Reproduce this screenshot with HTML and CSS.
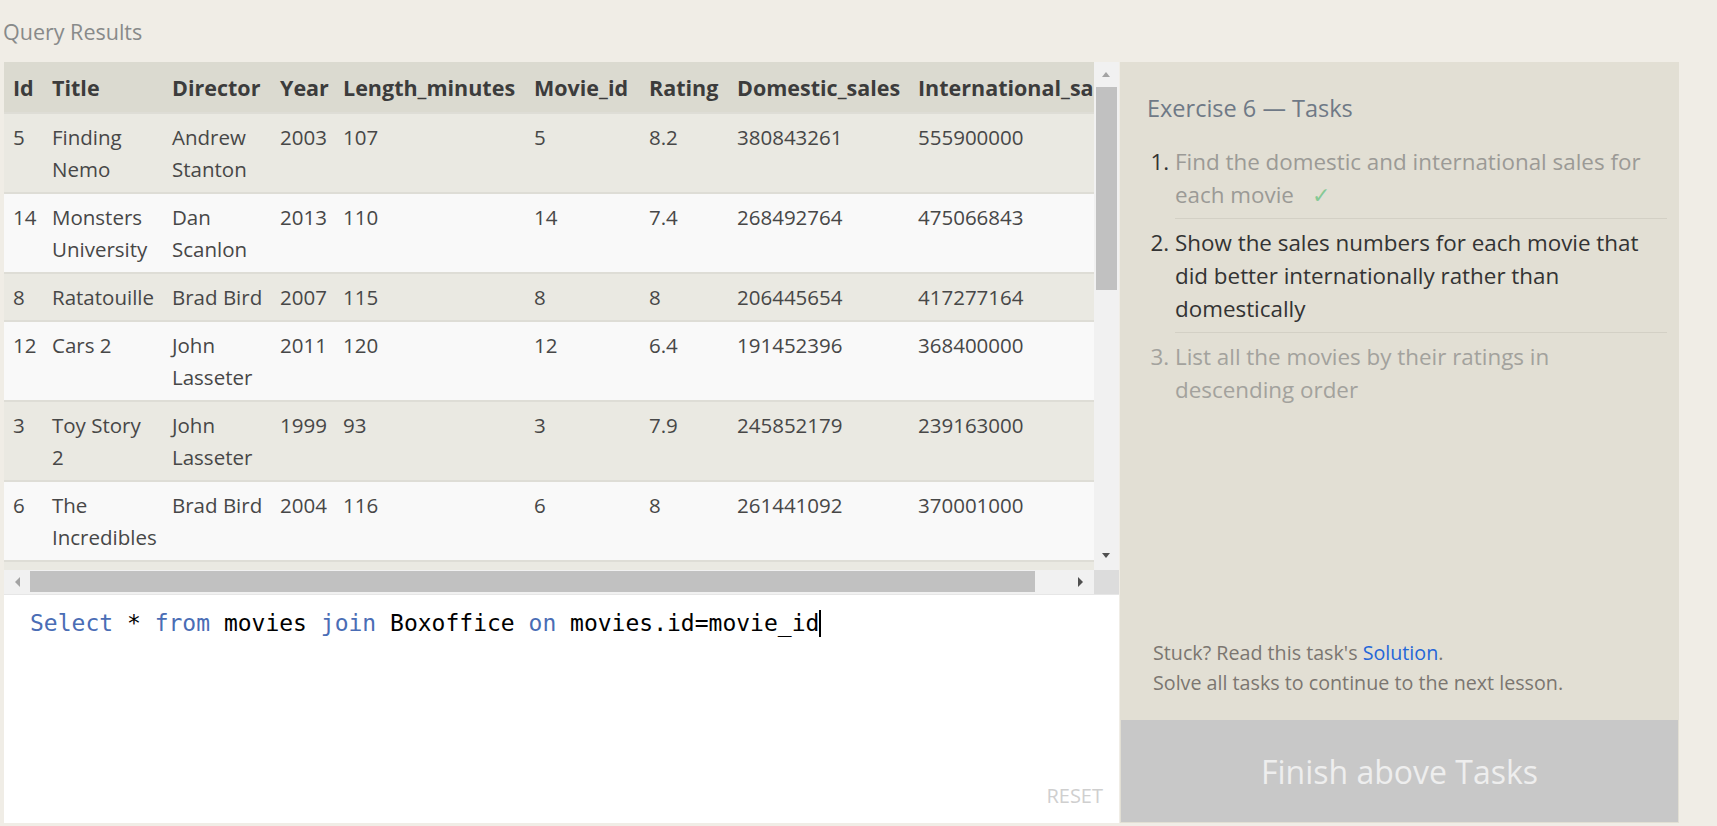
FILE: index.html
```html
<!DOCTYPE html>
<html lang="en">
<head>
<meta charset="utf-8">
<title>Query Results</title>
<link rel="stylesheet" href="styles.css">
</head>
<body>
<div class="app">
  <h2 class="qr-title">Query Results</h2>
  <div class="workspace">
    <section class="left">
      <div class="results">
        <div class="viewport">
          <table class="grid">
            <colgroup>
              <col class="c-id"><col class="c-title"><col class="c-dir"><col class="c-year"><col class="c-len"><col class="c-mid"><col class="c-rat"><col class="c-dom"><col class="c-int">
            </colgroup>
            <thead>
              <tr><th>Id</th><th>Title</th><th>Director</th><th>Year</th><th>Length_minutes</th><th>Movie_id</th><th>Rating</th><th>Domestic_sales</th><th>International_sales</th></tr>
            </thead>
            <tbody>
              <tr><td>5</td><td>Finding<br>Nemo</td><td>Andrew<br>Stanton</td><td>2003</td><td>107</td><td>5</td><td>8.2</td><td>380843261</td><td>555900000</td></tr>
              <tr><td>14</td><td>Monsters<br>University</td><td>Dan<br>Scanlon</td><td>2013</td><td>110</td><td>14</td><td>7.4</td><td>268492764</td><td>475066843</td></tr>
              <tr><td>8</td><td>Ratatouille</td><td>Brad Bird</td><td>2007</td><td>115</td><td>8</td><td>8</td><td>206445654</td><td>417277164</td></tr>
              <tr><td>12</td><td>Cars 2</td><td>John<br>Lasseter</td><td>2011</td><td>120</td><td>12</td><td>6.4</td><td>191452396</td><td>368400000</td></tr>
              <tr><td>3</td><td>Toy Story<br>2</td><td>John<br>Lasseter</td><td>1999</td><td>93</td><td>3</td><td>7.9</td><td>245852179</td><td>239163000</td></tr>
              <tr><td>6</td><td>The<br>Incredibles</td><td>Brad Bird</td><td>2004</td><td>116</td><td>6</td><td>8</td><td>261441092</td><td>370001000</td></tr>
              <tr class="peek"><td></td><td></td><td></td><td></td><td></td><td></td><td></td><td></td><td></td></tr>
            </tbody>
          </table>
        </div>
        <div class="vscroll">
          <span class="arrow arrow-up"></span>
          <div class="vthumb"></div>
          <span class="arrow arrow-down"></span>
        </div>
        <div class="hscroll">
          <span class="arrow arrow-left"></span>
          <div class="hthumb"></div>
          <span class="arrow arrow-right"></span>
        </div>
        <div class="corner"></div>
      </div>
      <div class="editor">
        <div class="code"><span class="kw">Select</span> * <span class="kw">from</span> movies <span class="kw">join</span> Boxoffice <span class="kw">on</span> movies.id=movie_id<span class="caret"></span></div>
        <div class="reset">RESET</div>
      </div>
    </section>
    <aside class="tasks">
      <h3 class="tasks-title">Exercise 6 — Tasks</h3>
      <ol class="task-list">
        <li class="task done"><span class="task-text">Find the domestic and international sales for each movie</span><span class="check">✓</span></li>
        <li class="task current">Show the sales numbers for each movie that did better internationally rather than domestically</li>
        <li class="task todo">List all the movies by their ratings in descending order</li>
      </ol>
      <div class="spacer"></div>
      <div class="stuck">
        <p>Stuck? Read this task's <a class="solution" href="#">Solution</a>.</p>
        <p>Solve all tasks to continue to the next lesson.</p>
      </div>
      <button class="finish" type="button">Finish above Tasks</button>
    </aside>
  </div>
</div>
</body>
</html>
```
FILE: styles.css
```css
* { box-sizing: border-box; }

html, body {
  margin: 0;
  padding: 0;
}

body {
  background: #f0ede6;
  font-family: "Open Sans", "Noto Sans", sans-serif;
  color: #444;
  width: 1717px;
  height: 826px;
  overflow: hidden;
}

.qr-title {
  margin: 0 0 0 3px;
  height: 62px;
  padding-top: 18px;
  font-size: 21.5px;
  line-height: 28px;
  font-weight: 400;
  color: #888a8a;
}

.workspace {
  display: flex;
  height: 761px;
}

.left {
  margin-left: 4px;
  width: 1115px;
  display: flex;
  flex-direction: column;
}

.results {
  display: grid;
  grid-template-columns: 1090px 25px;
  grid-template-rows: 508px 24px;
}

.viewport {
  overflow: hidden;
  background: #eae9e2;
}

.grid {
  border-collapse: collapse;
  table-layout: fixed;
  width: 1135px;
  font-size: 20.5px;
  line-height: 32px;
}

.c-id { width: 39px; }
.c-title { width: 120px; }
.c-dir { width: 108px; }
.c-year { width: 63px; }
.c-len { width: 191px; }
.c-mid { width: 115px; }
.c-rat { width: 88px; }
.c-dom { width: 181px; }
.c-int { width: 230px; }

.grid th,
.grid td {
  text-align: left;
  vertical-align: top;
  white-space: nowrap;
  overflow: hidden;
  padding: 7px 2px 7px 9px;
}

.grid th {
  background: #dbdad0;
  color: #3c3c3c;
  font-size: 21.5px;
  font-weight: 700;
  padding-top: 10px;
  padding-bottom: 8px;
}

.grid td {
  color: #474747;
  border-top: 2px solid #deddd6;
}

.grid .peek td { height: 46px; }

.grid tbody tr:nth-child(odd) td { background: #eae9e2; }
.grid tbody tr:nth-child(even) td { background: #f9f9f9; }

.vscroll {
  background: #f1f1f1;
  position: relative;
}

.vthumb {
  position: absolute;
  left: 2px;
  top: 25px;
  width: 21px;
  height: 203px;
  background: #c1c1c1;
}

.hscroll {
  background: #f1f1f1;
  position: relative;
}

.hthumb {
  position: absolute;
  left: 26px;
  top: 1px;
  width: 1005px;
  height: 21px;
  background: #c1c1c1;
}

.corner {
  background: #dcdcdc;
}

.arrow {
  position: absolute;
  width: 0;
  height: 0;
  border-style: solid;
}

.arrow-up {
  left: 8px;
  top: 10px;
  border-width: 0 4.5px 5px 4.5px;
  border-color: transparent transparent #a3a3a3 transparent;
}

.arrow-down {
  left: 8px;
  bottom: 12px;
  border-width: 5px 4.5px 0 4.5px;
  border-color: #505050 transparent transparent transparent;
}

.arrow-left {
  left: 11px;
  top: 7px;
  border-width: 5px 5px 5px 0;
  border-color: transparent #a3a3a3 transparent transparent;
}

.arrow-right {
  left: 1074px;
  top: 7px;
  border-width: 5px 0 5px 5px;
  border-color: transparent transparent transparent #505050;
}

.editor {
  flex: 1;
  background: #fff;
  border-top: 1px solid #e6e6e6;
  display: flex;
  flex-direction: column;
  justify-content: space-between;
  padding: 13px 16px 15px 26px;
}

.code {
  font-family: "DejaVu Sans Mono", "Liberation Mono", monospace;
  font-size: 23px;
  line-height: 30px;
  color: #000;
  white-space: pre;
}

.kw { color: #4a6db5; }

.caret {
  display: inline-block;
  width: 2px;
  height: 27px;
  background: #000;
  vertical-align: -6px;
}

.reset {
  align-self: flex-end;
  font-size: 20px;
  line-height: 24px;
  color: #cfcfcf;
}

.tasks {
  margin-left: 1px;
  width: 559px;
  background: #e2dfd4;
  display: flex;
  flex-direction: column;
  padding: 31px 12px 1px 27px;
}

.tasks-title {
  margin: 0;
  font-size: 23.5px;
  line-height: 30px;
  font-weight: 400;
  color: #6f7986;
}

.task-list {
  margin: 15px 0 0 0;
  padding-left: 28px;
  font-size: 22.4px;
  line-height: 33px;
}

.task {
  padding: 7px 0;
  border-bottom: 1px solid #d3d0c5;
}

.task:last-child { border-bottom: none; }

.task.done { color: #333; }
.task.done .task-text { color: #9b9a96; }
.check {
  color: #85c995;
  margin-left: 18px;
}

.task.current { color: #333; }
.task.todo { color: #a3a29d; }

.spacer { flex: 1; }

.stuck {
  padding-left: 6px;
  margin-bottom: 22px;
  font-size: 19.7px;
  line-height: 30px;
  color: #7b7670;
}

.stuck p { margin: 0; }

.solution {
  color: #2566d8;
  text-decoration: none;
}

.finish {
  margin: 0 -11px 0 -26px;
  height: 102px;
  border: none;
  background: #c8c8c8;
  color: #eeeeee;
  font-family: "Open Sans", "Noto Sans", sans-serif;
  font-size: 32px;
  padding: 0;
}
```
